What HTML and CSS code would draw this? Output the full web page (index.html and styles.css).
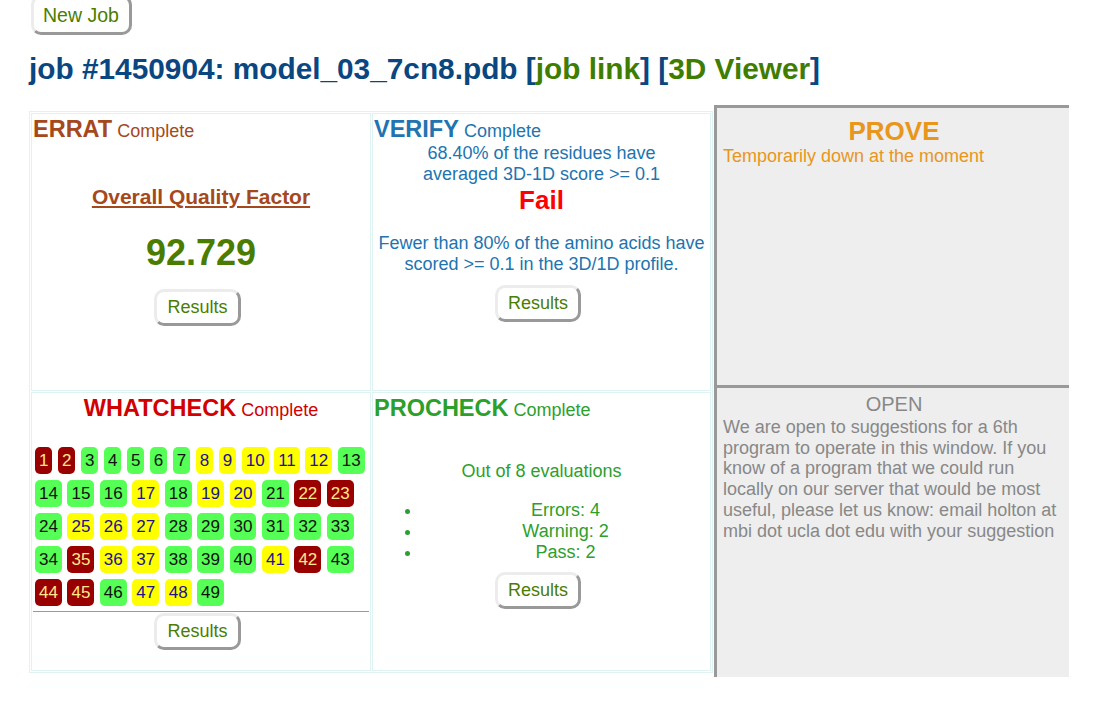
FILE: index.html
```html
<!DOCTYPE html>
<html>
<head>
<meta charset="utf-8">
<title>SAVES job 1450904</title>
<link rel="stylesheet" href="styles.css">
</head>
<body>
<div class="page">
  <a class="btn btn-new" href="#">New Job</a>
  <h1 class="title">job #1450904: model_03_7cn8.pdb [<a href="#">job link</a>] [<a href="#">3D Viewer</a>]</h1>

  <div class="panels">
    <div class="grid">
      <div class="cell errat">
        <div class="head"><b>ERRAT</b> Complete</div>
        <div class="oqf">Overall Quality Factor</div>
        <div class="score">92.729</div>
        <div class="btn-row"><a class="btn" href="#">Results</a></div>
      </div>

      <div class="cell verify">
        <div class="head"><b>VERIFY</b> Complete</div>
        <div class="center first">68.40% of the residues have<br>averaged 3D-1D score &gt;= 0.1</div>
        <div class="fail">Fail</div>
        <div class="center note">Fewer than 80% of the amino acids have<br>scored &gt;= 0.1 in the 3D/1D profile.</div>
        <div class="btn-row verify-btn"><a class="btn" href="#">Results</a></div>
      </div>

      <div class="cell whatcheck">
        <div class="head center"><b>WHATCHECK</b> Complete</div>
        <div class="badges">
          <span class="bd r">1</span><span class="bd r">2</span><span class="bd g">3</span><span class="bd g">4</span><span class="bd g">5</span><span class="bd g">6</span><span class="bd g">7</span><span class="bd y">8</span><span class="bd y">9</span><span class="bd y">10</span><span class="bd y">11</span><span class="bd y">12</span><span class="bd g">13</span>
          <span class="bd g">14</span><span class="bd g">15</span><span class="bd g">16</span><span class="bd y">17</span><span class="bd g">18</span><span class="bd y">19</span><span class="bd y">20</span><span class="bd g">21</span><span class="bd r">22</span><span class="bd r">23</span>
          <span class="bd g">24</span><span class="bd y">25</span><span class="bd y">26</span><span class="bd y">27</span><span class="bd g">28</span><span class="bd g">29</span><span class="bd g">30</span><span class="bd g">31</span><span class="bd g">32</span><span class="bd g">33</span>
          <span class="bd g">34</span><span class="bd r">35</span><span class="bd y">36</span><span class="bd y">37</span><span class="bd g">38</span><span class="bd g">39</span><span class="bd g">40</span><span class="bd y">41</span><span class="bd r">42</span><span class="bd g">43</span>
          <span class="bd r">44</span><span class="bd r">45</span><span class="bd g">46</span><span class="bd y">47</span><span class="bd y">48</span><span class="bd g">49</span>
        </div>
        <hr class="rule">
        <div class="btn-row wc-btn"><a class="btn" href="#">Results</a></div>
      </div>

      <div class="cell procheck">
        <div class="head"><b>PROCHECK</b> Complete</div>
        <div class="center evals">Out of 8 evaluations</div>
        <ul class="evlist">
          <li>Errors: 4</li>
          <li>Warning: 2</li>
          <li>Pass: 2</li>
        </ul>
        <div class="btn-row pc-btn"><a class="btn" href="#">Results</a></div>
      </div>
    </div>

    <div class="side">
      <div class="box prove">
        <div class="prove-title">PROVE</div>
        <div class="prove-text">Temporarily down at the moment</div>
      </div>
      <div class="box open">
        <div class="open-title">OPEN</div>
        <div class="open-text">We are open to suggestions for a 6th program to operate in this window. If you know of a program that we could run locally on our server that would be most useful, please let us know: email holton at mbi dot ucla dot edu with your suggestion</div>
      </div>
    </div>
  </div>
</div>
</body>
</html>
```

FILE: styles.css
```css
html, body {
  margin: 0;
  padding: 0;
  background: #ffffff;
}

body {
  font-family: "Liberation Sans", Arial, sans-serif;
  font-size: 18px;
  line-height: 21px;
  overflow: hidden;
}

.page {
  padding-left: 29px;
}

/* buttons */
.btn {
  display: inline-block;
  box-sizing: border-box;
  padding: 5px 10px;
  font-size: 18px;
  line-height: 21px;
  color: #4a7d00;
  text-decoration: none;
  background: #ffffff;
  border: 3px solid;
  border-color: #ececec #999999 #999999 #ececec;
  border-radius: 10px;
}

.btn-new {
  margin-left: 2px;
  margin-top: -5px;
  padding: 6px 10px 6px 9px;
  font-size: 19.5px;
  line-height: 22px;
}

.title {
  margin: 17px 0 0 0;
  font-size: 29.8px;
  line-height: 34px;
  font-weight: bold;
  color: #0a4680;
}

.title a {
  color: #3f7d00;
  text-decoration: none;
}

/* layout */
.panels {
  display: flex;
  align-items: flex-start;
  margin-top: 19px;
}

.grid {
  display: grid;
  grid-template-columns: 340px 339px;
  grid-template-rows: 278px 279px;
  gap: 1px;
  padding: 1px;
  margin-top: 6px;
  border: 1px solid #dff3f3;
}

.cell {
  box-sizing: border-box;
  border: 1px solid #dff3f3;
  padding: 2px 1px;
}

.head {
  font-size: 18px;
  line-height: 27px;
}

.head b {
  font-size: 23.5px;
}

.center {
  text-align: center;
}

.btn-row {
  text-align: center;
}

.btn-row .btn {
  margin-right: 7px;
}

/* ERRAT */
.errat {
  color: #a5481c;
}

.oqf {
  margin-top: 40px;
  text-align: center;
  font-size: 21px;
  line-height: 24px;
  font-weight: bold;
  text-decoration: underline;
}

.score {
  margin-top: 23px;
  text-align: center;
  font-size: 36px;
  line-height: 42px;
  font-weight: bold;
  color: #4a7c00;
}

.errat .btn-row {
  margin-top: 15px;
}

/* VERIFY */
.verify {
  color: #2174b0;
}

.first {
  margin-top: -2px;
}

.fail {
  text-align: center;
  font-size: 26px;
  line-height: 30px;
  font-weight: bold;
  color: #ff0000;
}

.note {
  margin-top: 18px;
}

.verify-btn {
  margin-top: 10px;
}

/* WHATCHECK */
.whatcheck {
  color: #d20000;
}

.badges {
  display: flex;
  flex-wrap: wrap;
  column-gap: 5.5px;
  row-gap: 6px;
  margin: 23px 0 0 2px;
}

.bd {
  display: block;
  padding: 0 4px;
  font-size: 17px;
  line-height: 27px;
  border-radius: 5px;
}

.bd.r {
  background: #990000;
  color: #ffe98a;
}

.bd.g {
  background: #55ff55;
  color: #111111;
}

.bd.y {
  background: #ffff00;
  color: #22118f;
}

.rule {
  margin: 5px 0 0;
  border: 0;
  border-top: 1px solid #9a9a9a;
  height: 0;
}

.wc-btn {
  margin-top: 1px;
}

/* PROCHECK */
.procheck {
  color: #2ca02c;
}

.evals {
  margin-top: 37px;
}

.evlist {
  margin: 18px 0 0;
  padding-left: 48px;
  text-align: center;
}

.pc-btn {
  margin-top: 9px;
}

/* right side */
.side {
  margin-left: 1px;
  width: 355px;
}

.box {
  box-sizing: border-box;
  background: #eeeeee;
  border-top: 3px solid #999999;
  border-left: 3px solid #999999;
  padding: 0 4px 0 6px;
}

.prove {
  height: 280px;
  padding-top: 8px;
  color: #e8961c;
}

.prove-title {
  text-align: center;
  font-size: 26px;
  line-height: 30px;
  font-weight: bold;
}

.prove-text {
  font-size: 18px;
  line-height: 21px;
}

.open {
  height: 292px;
  padding-top: 5px;
  color: #888888;
}

.open-title {
  text-align: center;
  font-size: 20px;
  line-height: 23px;
}

.open-text {
  font-size: 18px;
  line-height: 20.7px;
  margin-top: 1px;
}
```
